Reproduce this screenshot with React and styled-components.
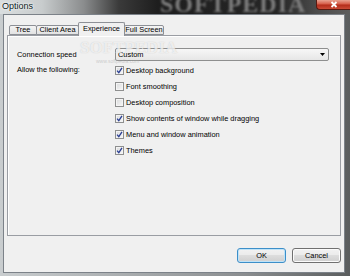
import styled, { createGlobalStyle } from 'styled-components'

const GlobalStyle = createGlobalStyle`
  * { box-sizing: border-box; }
  body {
    margin: 0;
    background: #2a2a2a;
    font-family: "Liberation Sans", Arial, sans-serif;
  }
`

const Window = styled.div`
  width: 350px;
  height: 276px;
  display: flex;
  flex-direction: column;
  position: relative;
  overflow: hidden;
  background: linear-gradient(to right, #c9cdcf 0%, #aeb2b4 30%, #8a8d8f 70%, #5a5d5e 100%);
  font-family: "Liberation Sans", Arial, sans-serif;
`

const TitleBar = styled.div`
  height: 14px;
  display: flex;
  align-items: flex-start;
  position: relative;
  background: linear-gradient(to right, #dadedf 0%, #c8cccd 12%, #8a8c8d 24%, #3a3a3a 34%, #1e1e1e 45%, #262626 80%, #4a4a4a 90%, #5e5e5e 100%);
`

const TitleText = styled.span`
  font-size: 9px;
  line-height: 12px;
  padding-left: 2px;
  color: #0c1a22;
  text-shadow: 0 0 3px #fff, 0 0 2px #fff;
  position: relative;
  z-index: 1;
`

const TitleWatermark = styled.span`
  position: absolute;
  left: 160px;
  top: -8px;
  font-family: "Liberation Serif", "Times New Roman", serif;
  font-weight: bold;
  font-size: 24px;
  line-height: 24px;
  letter-spacing: 1px;
  color: #7c7c7c;
  filter: blur(0.8px);
`

const CloseButton = styled.div`
  margin-left: auto;
  width: 34px;
  height: 10px;
  display: flex;
  align-items: center;
  justify-content: center;
  border: 1px solid #5a1a10;
  border-top: none;
  border-right: none;
  border-radius: 0 0 0 4px;
  background: linear-gradient(#e8a392 0%, #d65c48 45%, #b32c1a 55%, #c94a36 100%);
  position: relative;
  z-index: 1;
`

const Client = styled.div`
  flex: 1;
  margin: 0 5px 3px 3px;
  background: #f0f0f0;
  border: 1px solid #7c8289;
  padding: 7px 3px 9px 3px;
  display: flex;
  flex-direction: column;
`

const TabStrip = styled.div`
  display: flex;
  align-items: flex-end;
  height: 14px;
  padding-left: 2px;
  margin-bottom: -1px;
  position: relative;
  z-index: 1;
`

const Tab = styled.div`
  width: ${p => p.$w}px;
  height: ${p => (p.$active ? 14 : 10)}px;
  margin: 0 -1px ${p => (p.$active ? 0 : 1)}px 0;
  border: 1px solid #8d9096;
  border-bottom: ${p => (p.$active ? 'none' : '1px solid #8d9096')};
  border-radius: 2px 2px 0 0;
  background: ${p => (p.$active ? '#f0f0f0' : 'linear-gradient(#f4f4f4, #e2e2e2)')};
  position: relative;
  z-index: ${p => (p.$active ? 2 : 1)};
  font-size: 7.4px;
  line-height: ${p => (p.$active ? 11 : 8)}px;
  text-align: center;
  color: #000;
  white-space: nowrap;
`

const Panel = styled.div`
  height: 201px;
  border: 1px solid #9a9da3;
  box-shadow: inset 1px 1px 0 #fff;
  background: #f0f0f0;
  padding: 12px 11px 0 9px;
  display: grid;
  grid-template-columns: 98px 1fr;
  grid-template-rows: 13px auto;
  align-content: start;
`

const Label = styled.div`
  font-size: 7.4px;
  line-height: ${p => p.$h || 13}px;
  color: #000;
  white-space: nowrap;
  margin-top: ${p => p.$mt || 0}px;
`

const Combo = styled.div`
  height: 13px;
  border: 1px solid #8e8f8f;
  border-radius: 2px;
  background: linear-gradient(#f7f7f7, #e6e6e6);
  display: flex;
  align-items: center;
  justify-content: space-between;
  padding: 0 3px 0 2px;
  font-size: 7.4px;
  color: #000;
`

const CheckList = styled.div`
  display: flex;
  flex-direction: column;
  margin-top: 1px;
`

const CheckRow = styled.div`
  height: 16px;
  display: flex;
  align-items: center;
  gap: 2px;
  font-size: 7.4px;
  color: #000;
  white-space: nowrap;
`

const Box = styled.div`
  width: 9px;
  height: 9px;
  border: 1px solid #8e8f8f;
  background: linear-gradient(135deg, #d9dadb, #f7f7f7);
  box-shadow: inset 0 0 0 1px #f4f4f4;
  display: flex;
  align-items: center;
  justify-content: center;
`

const ButtonRow = styled.div`
  display: flex;
  justify-content: flex-end;
  gap: 6px;
  margin-top: 12px;
`

const Button = styled.div`
  width: 49px;
  height: 15px;
  border-radius: 3px;
  border: 1px solid ${p => (p.$primary ? '#3c8fc9' : '#707070')};
  box-shadow: ${p => (p.$primary ? 'inset 0 0 0 1px #bfe3f8' : 'inset 0 0 0 1px #fbfbfb')};
  background: linear-gradient(#f2f2f2 0%, #ebebeb 49%, #dddddd 50%, #cfcfcf 100%);
  font-size: 7.4px;
  line-height: 13px;
  text-align: center;
  color: #000;
`

const PanelWatermark = styled.div`
  position: absolute;
  left: 80px;
  top: 39px;
  font-family: "Liberation Serif", "Times New Roman", serif;
  font-weight: bold;
  font-size: 17px;
  line-height: 17px;
  color: rgba(255, 255, 255, 0.7);
  text-shadow: 0 0 1px rgba(150, 150, 150, 0.5);
  pointer-events: none;
`

const SiteWatermark = styled.div`
  position: absolute;
  left: 96px;
  top: 58px;
  font-size: 5px;
  color: rgba(170, 170, 170, 0.55);
  pointer-events: none;
`

const Check = ({ checked }) => (
  <Box>
    {checked && (
      <svg width="7" height="7" viewBox="0 0 7 7">
        <path d="M1 3.6 L2.8 5.6 L6 0.8" fill="none" stroke="#2b3f93" strokeWidth="1.3" />
      </svg>
    )}
  </Box>
)

const options = [
  { label: 'Desktop background', checked: true },
  { label: 'Font smoothing', checked: false },
  { label: 'Desktop composition', checked: false },
  { label: 'Show contents of window while dragging', checked: true },
  { label: 'Menu and window animation', checked: true },
  { label: 'Themes', checked: true },
]

const tabs = [
  { label: 'Tree', w: 28 },
  { label: 'Client Area', w: 43 },
  { label: 'Experience', w: 47, active: true },
  { label: 'Full Screen', w: 40 },
]

const App = () => {
  return (
    <>
      <GlobalStyle />
      <Window>
        <TitleBar>
          <TitleText>Options</TitleText>
          <TitleWatermark>SOFTPEDIA</TitleWatermark>
          <CloseButton>
            <svg width="8" height="7" viewBox="0 0 8 7">
              <path d="M1.5 1 L6.5 6 M6.5 1 L1.5 6" stroke="#fff" strokeWidth="1.8" />
            </svg>
          </CloseButton>
        </TitleBar>
        <Client>
          <TabStrip>
            {tabs.map(t => (
              <Tab key={t.label} $w={t.w} $active={t.active}>{t.label}</Tab>
            ))}
          </TabStrip>
          <Panel>
            <Label>Connection speed</Label>
            <Combo>
              <span>Custom</span>
              <svg width="5" height="3" viewBox="0 0 5 3">
                <path d="M0 0 L5 0 L2.5 3 Z" fill="#000" />
              </svg>
            </Combo>
            <Label $h={16} $mt={1}>Allow the following:</Label>
            <CheckList>
              {options.map(o => (
                <CheckRow key={o.label}>
                  <Check checked={o.checked} />
                  {o.label}
                </CheckRow>
              ))}
            </CheckList>
          </Panel>
          <ButtonRow>
            <Button $primary>OK</Button>
            <Button>Cancel</Button>
          </ButtonRow>
        </Client>
        <PanelWatermark>SOFTPEDIA</PanelWatermark>
        <SiteWatermark>www.softpedia.com</SiteWatermark>
      </Window>
    </>
  )
}

export default App
